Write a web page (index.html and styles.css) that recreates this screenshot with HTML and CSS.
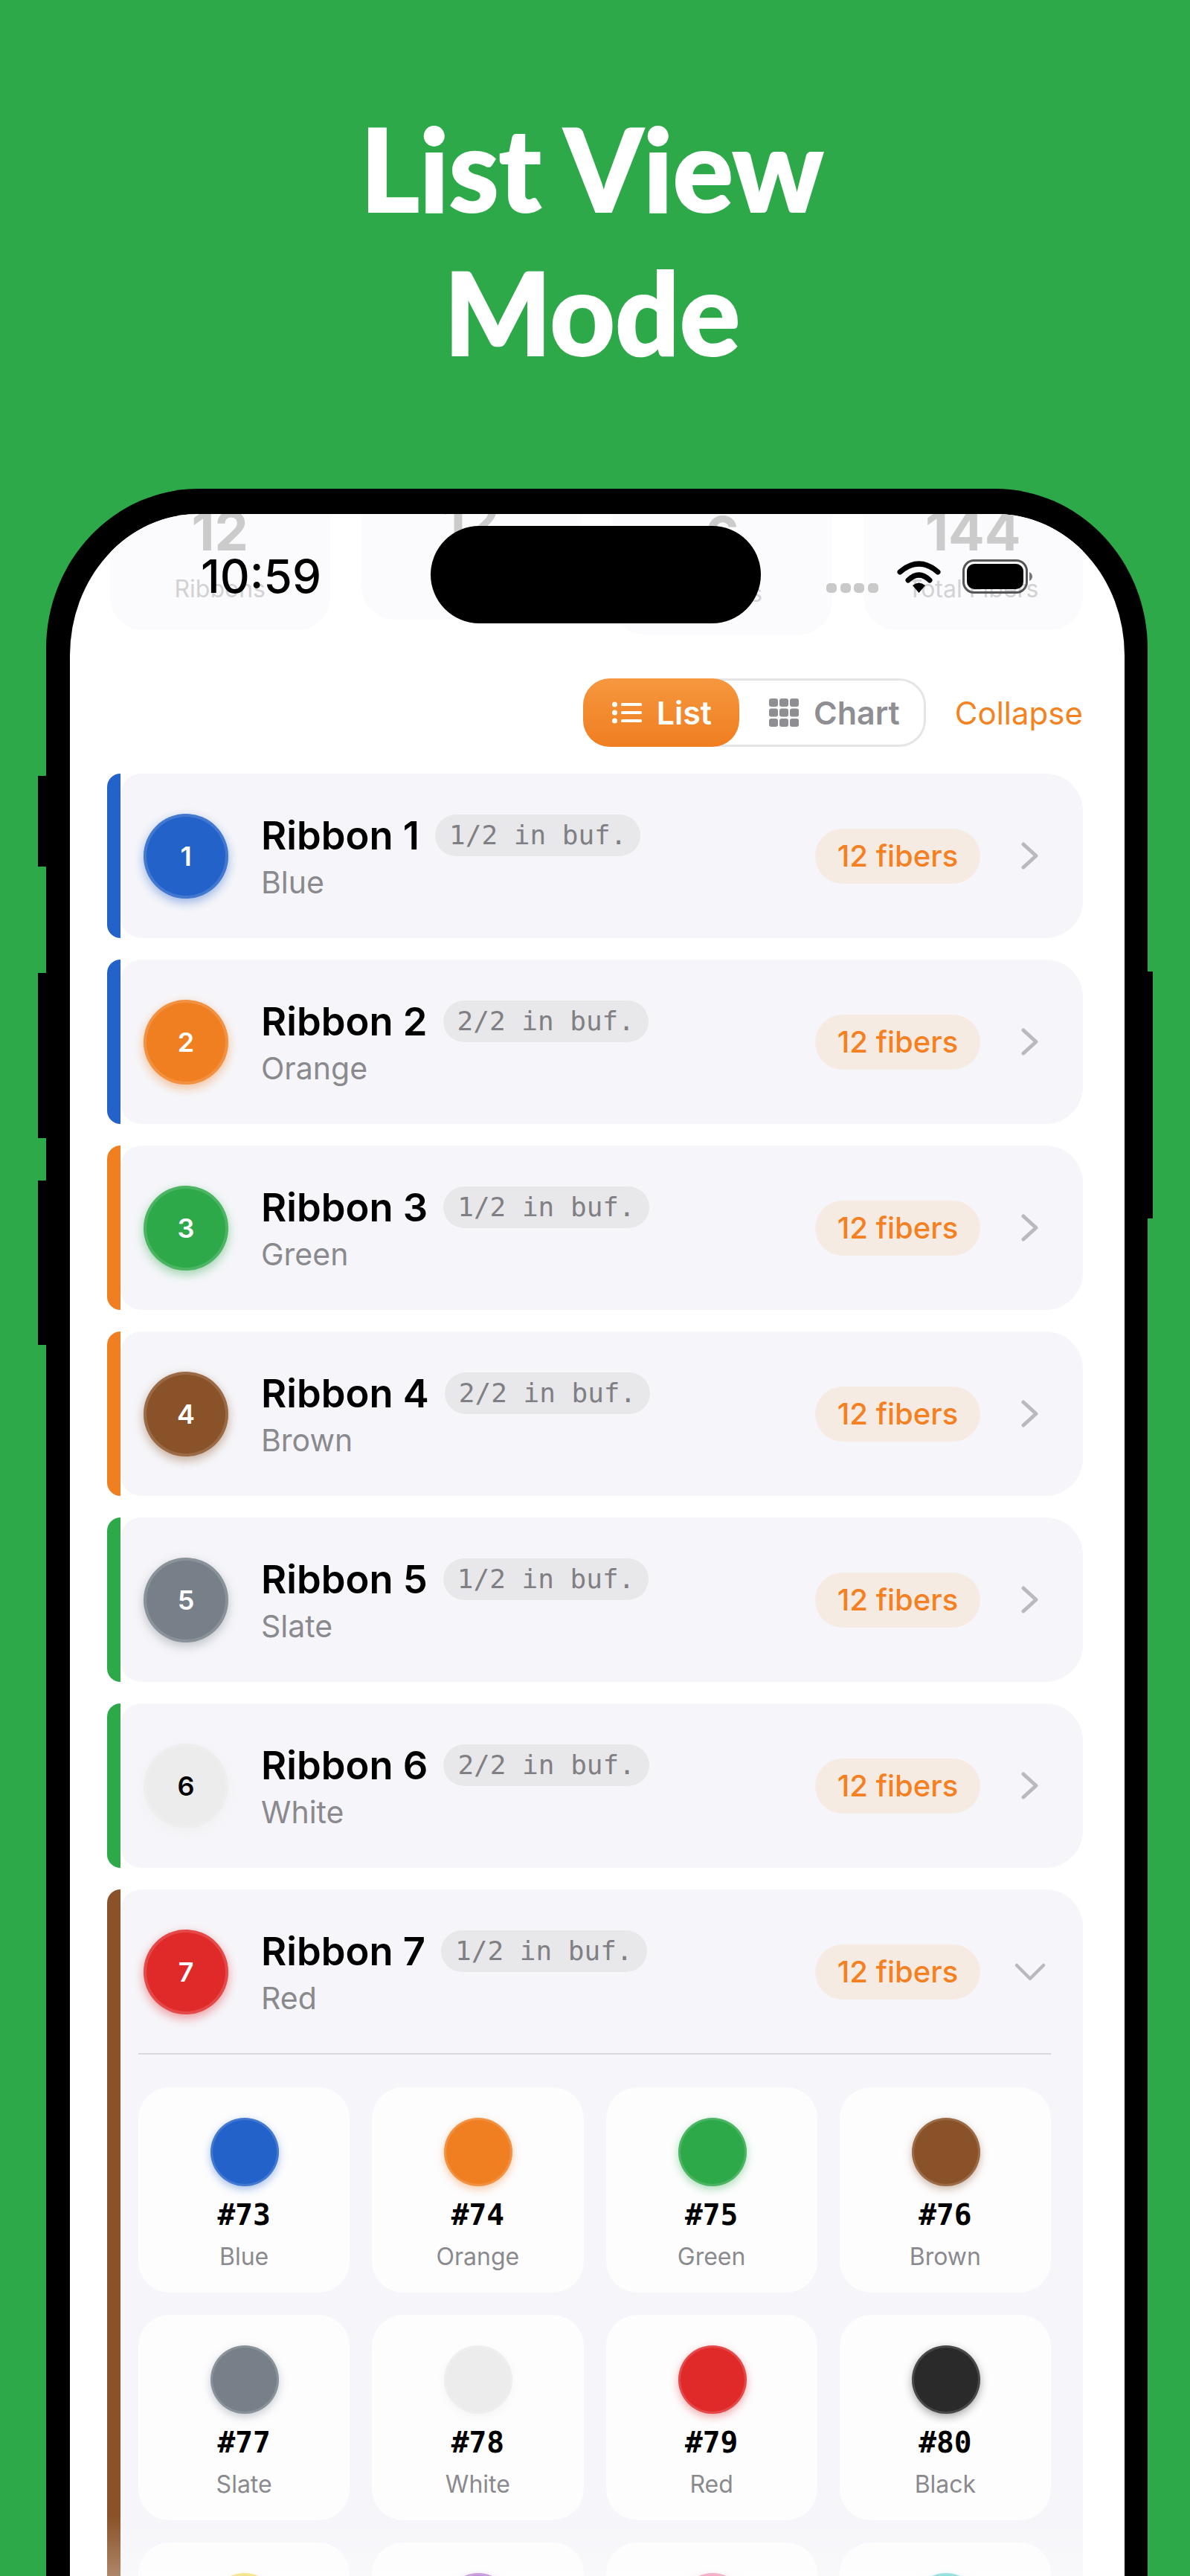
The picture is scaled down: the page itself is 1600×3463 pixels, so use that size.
FILE: index.html
```html
<!DOCTYPE html>
<html lang="en">
<head>
<meta charset="utf-8">
<title>List View Mode</title>
<link rel="stylesheet" href="styles.css">
</head>
<body>
<main class="page">
  <h1 class="headline">List View<br>Mode</h1>
  <div class="phone">
    <span class="side side-l1"></span>
    <span class="side side-l2"></span>
    <span class="side side-l3"></span>
    <span class="side side-r1"></span>
    <div class="screen">
      <div class="status">
        <span class="time">10:59</span>
        <div class="status-right">
          <div class="signal"><i></i><i></i><i></i><i></i></div>
          <svg class="wifi" viewBox="0 0 59 43" width="59" height="43"><path d="M4 15Q29.500 -7 55 15" fill="none" stroke="#000" stroke-width="7" stroke-linecap="round"/><path d="M15 26Q29.500 12 44 26" fill="none" stroke="#000" stroke-width="7" stroke-linecap="round"/><path d="M21 33Q29.500 26 38 33L29.500 43Z" fill="#000"/></svg>
          <svg class="battery" viewBox="0 0 94 46" width="94" height="46"><rect x="1.500" y="1.500" width="85" height="43" rx="14" fill="none" stroke="#555" stroke-width="3"/><rect x="6" y="6" width="76" height="34" rx="10" fill="#000"/><path d="M90 17Q94 19 94 23Q94 27 90 29Z" fill="#777"/></svg>
        </div>
      </div>
      <div class="island"></div>
      <div class="stats">
        <div class="stat"><b>12</b><span>Ribbons</span></div>
        <div class="stat stat-up"><b>12</b><span>Fibers</span></div>
        <div class="stat stat-down"><b>6</b><span>Buffers</span></div>
        <div class="stat"><b>144</b><span>Total Fibers</span></div>
      </div>
      <div class="controls">
        <div class="toggle">
          <div class="seg seg-on">
            <svg viewBox="0 0 40 30" width="40" height="30"><g fill="#fff"><circle cx="3.500" cy="4" r="3.500"/><circle cx="3.500" cy="15" r="3.500"/><circle cx="3.500" cy="26" r="3.500"/><rect x="12" y="2" width="28" height="4" rx="1.500"/><rect x="12" y="13" width="28" height="4" rx="1.500"/><rect x="12" y="24" width="28" height="4" rx="1.500"/></g></svg>
            <span>List</span>
          </div>
          <div class="seg seg-off">
            <svg viewBox="0 0 40 38" width="40" height="38"><g fill="#8e8e93"><rect x="0" y="0" width="12" height="11" rx="3"/><rect x="14" y="0" width="12" height="11" rx="3"/><rect x="28" y="0" width="12" height="11" rx="3"/><rect x="0" y="13.500" width="12" height="11" rx="3"/><rect x="14" y="13.500" width="12" height="11" rx="3"/><rect x="28" y="13.500" width="12" height="11" rx="3"/><rect x="0" y="27" width="12" height="11" rx="3"/><rect x="14" y="27" width="12" height="11" rx="3"/><rect x="28" y="27" width="12" height="11" rx="3"/></g></svg>
            <span>Chart</span>
          </div>
        </div>
        <span class="collapse">Collapse</span>
      </div>
      <div class="list">
        <article class="ribbon c-blue-bar">
          <div class="bar"></div>
          <div class="card">
            <div class="head">
              <div class="dot c-blue">1</div>
              <div class="info"><div class="line"><span class="name">Ribbon 1</span><span class="buf">1/2 in buf.</span></div><div class="sub">Blue</div></div>
              <span class="count">12 fibers</span>
              <svg class="chev" viewBox="0 0 23 37" width="23" height="37"><path d="M3 3L20 18.500L3 34" fill="none" stroke="#b9b9be" stroke-width="5" stroke-linecap="round" stroke-linejoin="round"/></svg>
            </div>
          </div>
        </article>
        <article class="ribbon c-blue-bar">
          <div class="bar"></div>
          <div class="card">
            <div class="head">
              <div class="dot c-orange">2</div>
              <div class="info"><div class="line"><span class="name">Ribbon 2</span><span class="buf">2/2 in buf.</span></div><div class="sub">Orange</div></div>
              <span class="count">12 fibers</span>
              <svg class="chev" viewBox="0 0 23 37" width="23" height="37"><path d="M3 3L20 18.500L3 34" fill="none" stroke="#b9b9be" stroke-width="5" stroke-linecap="round" stroke-linejoin="round"/></svg>
            </div>
          </div>
        </article>
        <article class="ribbon c-orange-bar">
          <div class="bar"></div>
          <div class="card">
            <div class="head">
              <div class="dot c-green">3</div>
              <div class="info"><div class="line"><span class="name">Ribbon 3</span><span class="buf">1/2 in buf.</span></div><div class="sub">Green</div></div>
              <span class="count">12 fibers</span>
              <svg class="chev" viewBox="0 0 23 37" width="23" height="37"><path d="M3 3L20 18.500L3 34" fill="none" stroke="#b9b9be" stroke-width="5" stroke-linecap="round" stroke-linejoin="round"/></svg>
            </div>
          </div>
        </article>
        <article class="ribbon c-orange-bar">
          <div class="bar"></div>
          <div class="card">
            <div class="head">
              <div class="dot c-brown">4</div>
              <div class="info"><div class="line"><span class="name">Ribbon 4</span><span class="buf">2/2 in buf.</span></div><div class="sub">Brown</div></div>
              <span class="count">12 fibers</span>
              <svg class="chev" viewBox="0 0 23 37" width="23" height="37"><path d="M3 3L20 18.500L3 34" fill="none" stroke="#b9b9be" stroke-width="5" stroke-linecap="round" stroke-linejoin="round"/></svg>
            </div>
          </div>
        </article>
        <article class="ribbon c-green-bar">
          <div class="bar"></div>
          <div class="card">
            <div class="head">
              <div class="dot c-slate">5</div>
              <div class="info"><div class="line"><span class="name">Ribbon 5</span><span class="buf">1/2 in buf.</span></div><div class="sub">Slate</div></div>
              <span class="count">12 fibers</span>
              <svg class="chev" viewBox="0 0 23 37" width="23" height="37"><path d="M3 3L20 18.500L3 34" fill="none" stroke="#b9b9be" stroke-width="5" stroke-linecap="round" stroke-linejoin="round"/></svg>
            </div>
          </div>
        </article>
        <article class="ribbon c-green-bar">
          <div class="bar"></div>
          <div class="card">
            <div class="head">
              <div class="dot c-white">6</div>
              <div class="info"><div class="line"><span class="name">Ribbon 6</span><span class="buf">2/2 in buf.</span></div><div class="sub">White</div></div>
              <span class="count">12 fibers</span>
              <svg class="chev" viewBox="0 0 23 37" width="23" height="37"><path d="M3 3L20 18.500L3 34" fill="none" stroke="#b9b9be" stroke-width="5" stroke-linecap="round" stroke-linejoin="round"/></svg>
            </div>
          </div>
        </article>
        <article class="ribbon c-brown-bar">
          <div class="bar"></div>
          <div class="card">
            <div class="head">
              <div class="dot c-red">7</div>
              <div class="info"><div class="line"><span class="name">Ribbon 7</span><span class="buf">1/2 in buf.</span></div><div class="sub">Red</div></div>
              <span class="count">12 fibers</span>
              <svg class="chev-down" viewBox="0 0 42 24" width="42" height="24"><path d="M3 3L21 21L39 3" fill="none" stroke="#b9b9be" stroke-width="4.500" stroke-linecap="round" stroke-linejoin="round"/></svg>
            </div>
            <div class="fibers">
              <div class="tile"><div class="swatch c-blue"></div><div class="num">#73</div><div class="lab">Blue</div></div>
              <div class="tile"><div class="swatch c-orange"></div><div class="num">#74</div><div class="lab">Orange</div></div>
              <div class="tile"><div class="swatch c-green"></div><div class="num">#75</div><div class="lab">Green</div></div>
              <div class="tile"><div class="swatch c-brown"></div><div class="num">#76</div><div class="lab">Brown</div></div>
              <div class="tile"><div class="swatch c-slate"></div><div class="num">#77</div><div class="lab">Slate</div></div>
              <div class="tile"><div class="swatch c-white"></div><div class="num">#78</div><div class="lab">White</div></div>
              <div class="tile"><div class="swatch c-red"></div><div class="num">#79</div><div class="lab">Red</div></div>
              <div class="tile"><div class="swatch c-black"></div><div class="num">#80</div><div class="lab">Black</div></div>
              <div class="tile"><div class="swatch c-yellow"></div><div class="num">#81</div><div class="lab">Yellow</div></div>
              <div class="tile"><div class="swatch c-violet"></div><div class="num">#82</div><div class="lab">Violet</div></div>
              <div class="tile"><div class="swatch c-rose"></div><div class="num">#83</div><div class="lab">Rose</div></div>
              <div class="tile"><div class="swatch c-aqua"></div><div class="num">#84</div><div class="lab">Aqua</div></div>
            </div>
          </div>
        </article>
      </div>
      <div class="fade"></div>
    </div>
  </div>
</main>
</body>
</html>
```

FILE: styles.css
```css
* { box-sizing: border-box; }
html, body { margin: 0; padding: 0; height: 3463px; overflow: hidden; }
body { background: #2ea94a; font-family: Inter, "Liberation Sans", sans-serif; color: #000; }

.page { height: 3463px; overflow: hidden; padding-top: 129px; }

.headline {
  margin: 0;
  height: 528px;
  padding-right: 8px;
  color: #fff;
  font-family: Lato, "Open Sans", sans-serif;
  font-weight: 900;
  font-size: 155px;
  line-height: 193px;
  text-align: center;
  -webkit-text-stroke: 2px #fff;
  transform: scaleX(.98);
}

.phone {
  position: relative;
  margin-left: 62px;
  width: 1481px;
  padding: 34px 31px 0 32px;
  background: #000;
  border-radius: 205px 205px 0 0 / 215px 215px 0 0;
}
.side { position: absolute; background: #000; }
.side-l1 { left: -11px; width: 11px; top: 386px; height: 122px; }
.side-l2 { left: -11px; width: 11px; top: 651px; height: 222px; }
.side-l3 { left: -11px; width: 11px; top: 930px; height: 221px; }
.side-r1 { right: -7px; width: 7px; top: 649px; height: 332px; }

.screen {
  position: relative;
  overflow: hidden;
  background: #fff;
  border-radius: 172px 172px 0 0 / 190px 190px 0 0;
  padding: 0 56px 0 50px;
}

.status {
  position: absolute;
  z-index: 3;
  left: 0;
  right: 0;
  top: 54px;
  height: 60px;
  padding: 0 124px 0 176px;
  display: flex;
  align-items: center;
  justify-content: space-between;
}
.time { font-size: 62px; line-height: 60px; font-weight: 500; letter-spacing: 0; }
.status-right { display: flex; align-items: center; gap: 27px; }
.signal { display: flex; gap: 4.600px; margin-top: 30px; }
.signal i { width: 14px; height: 13px; border-radius: 5px; background: #c9c9c9; }
.wifi { display: block; margin: 0 2px 0 -2px; }
.battery { display: block; }

.island {
  position: absolute;
  z-index: 4;
  left: 485px;
  top: 16px;
  width: 444px;
  height: 131px;
  border-radius: 66px;
  background: #000;
}

.stats {
  margin: -44px 0 65px 4px;
  height: 200px;
  display: grid;
  grid-template-columns: repeat(4, 1fr);
  gap: 42px;
  align-items: start;
}
.stat {
  height: 200px;
  background: #fbfbfd;
  border-radius: 44px;
  display: flex;
  flex-direction: column;
  align-items: center;
  padding-top: 23px;
}
.stat-up { margin-top: -14px; }
.stat-down { margin-top: 6px; }
.stat b { font-size: 72px; line-height: 87px; font-weight: 700; color: #cbcbcb; }
.stat span { margin-top: 15px; font-size: 32px; line-height: 40px; color: #d2d2d4; white-space: nowrap; }

.controls {
  display: flex;
  align-items: center;
  justify-content: flex-end;
  gap: 39px;
  margin-bottom: 36px;
}
.toggle {
  display: flex;
  width: 461px;
  height: 92px;
  border: 3px solid #e5e5e8;
  border-radius: 36px;
  background: #fff;
}
.seg {
  flex: 1;
  display: flex;
  align-items: center;
  justify-content: center;
  gap: 20px;
  font-size: 43px;
  font-weight: 600;
  color: #8e8e93;
}
.seg-off { padding-left: 8px; }
.seg-on {
  flex: 0 0 210px;
  margin: -3px 0 -3px -3px;
  padding-left: 2px;
  border-radius: 36px;
  color: #fff;
  background: linear-gradient(#f6973f, #ef7e20);
}
.collapse { font-size: 42px; color: #f58220; }

.list { display: flex; flex-direction: column; gap: 29px; }
.ribbon { display: flex; }
.bar { flex: 0 0 18px; border-radius: 18px 0 0 18px; }
.card { flex: 1; min-width: 0; background: #f6f6fa; border-radius: 28px 50px 50px 28px; }
.c-blue-bar .bar { background: #2362c9; }
.c-orange-bar .bar { background: #f07f22; }
.c-green-bar .bar { background: #2ea94a; }
.c-brown-bar .bar { background: #8a5228; }

.head {
  height: 221px;
  display: flex;
  align-items: center;
  padding: 0 60px 0 31px;
}
.c-blue { --c: #2362c9; --o: #fff; }
.c-orange { --c: #f07f22; --o: #fff; }
.c-green { --c: #2ea94a; --o: #fff; }
.c-brown { --c: #8a5228; --o: #fff; }
.c-slate { --c: #778089; --o: #fff; }
.c-white { --c: #ececec; --o: #000; }
.c-red { --c: #e02a2a; --o: #fff; }
.c-black { --c: #2a2a2a; --o: #fff; }
.c-yellow { --c: #eed64a; --o: #000; }
.c-violet { --c: #a660c9; --o: #fff; }
.c-rose { --c: #ea82a8; --o: #fff; }
.c-aqua { --c: #56cfcb; --o: #fff; }

.dot {
  flex: 0 0 114px;
  height: 114px;
  border-radius: 50%;
  background: var(--c);
  color: var(--o);
  display: flex;
  align-items: center;
  justify-content: center;
  font-size: 36px;
  font-weight: 600;
  box-shadow: inset 0 0 0 4px rgba(255,255,255,.14), 0 5px 14px color-mix(in srgb, var(--c) 45%, transparent);
}
.info { flex: 1; min-width: 0; margin-left: 44px; padding-top: 4px; }
.line { display: flex; align-items: center; gap: 21px; height: 60px; }
.name { font-size: 52.500px; line-height: 60px; font-weight: 600; }
.buf {
  height: 56px;
  padding: 0 19px;
  border-radius: 28px;
  background: #e8e8ea;
  color: #808084;
  font-family: "DejaVu Sans Mono", "Liberation Mono", monospace;
  font-size: 36px;
  line-height: 56px;
  white-space: nowrap;
}
.sub { font-size: 41px; line-height: 52px; color: #8a8a8e; margin-top: 7px; }
.count {
  width: 222px;
  height: 74px;
  border-radius: 37px;
  background: #f6ebe2;
  color: #f58021;
  font-size: 40px;
  font-weight: 500;
  line-height: 74px;
  text-align: center;
}
.chev { margin-left: 55px; margin-right: 0; }
.chev-down { margin-left: 46px; margin-right: -10px; }

.fibers {
  border-top: 2px solid #d9d9dd;
  margin: -1px 43px 0 24px;
  padding-top: 44px;
  display: grid;
  grid-template-columns: repeat(4, 1fr);
  gap: 30px 30px;
}
.tile {
  height: 276px;
  border-radius: 42px;
  background: #fdfdfe;
  display: flex;
  flex-direction: column;
  align-items: center;
  padding-top: 41px;
}
.swatch {
  width: 92px;
  height: 92px;
  margin-left: 2px;
  border-radius: 50%;
  background: var(--c);
  box-shadow: inset 0 0 0 3px rgba(255,255,255,.14), 0 4px 12px color-mix(in srgb, var(--c) 40%, transparent);
}
.num {
  margin-top: 13px;
  font-family: "DejaVu Sans Mono", "Liberation Mono", monospace;
  font-weight: 700;
  font-size: 39.500px;
  line-height: 50px;
}
.lab { margin-top: 12px; font-size: 32px; line-height: 40px; color: #8a8a8e; }

.fade {
  position: absolute;
  left: 0;
  right: 0;
  top: 2692px;
  height: 80px;
  background: linear-gradient(rgba(255,255,255,0), rgba(255,255,255,.3));
}
```
